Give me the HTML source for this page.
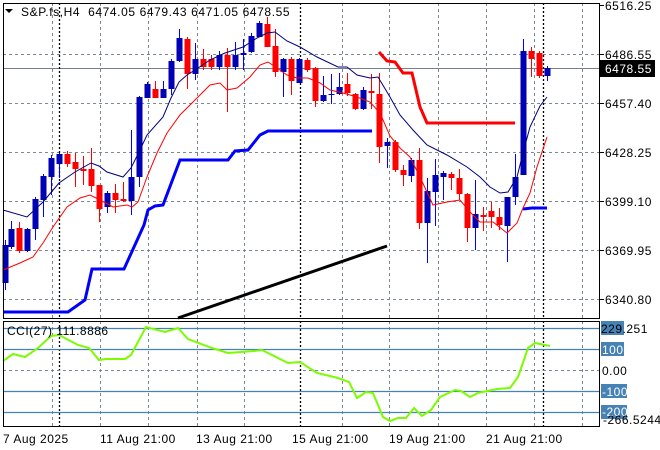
<!DOCTYPE html><html><head><meta charset="utf-8"><style>
body{margin:0;background:#fff;width:660px;height:450px;overflow:hidden;font-family:"Liberation Sans",sans-serif}
svg{position:absolute;left:0;top:0}
text{font-family:"Liberation Sans",sans-serif;font-size:12px;fill:#000;letter-spacing:0.5px}
</style></head><body>
<svg id="s" width="660" height="450" xmlns="http://www.w3.org/2000/svg">
<g stroke="#7b8896" stroke-dasharray="3,3" stroke-width="1" fill="none" id="grid"></g>
<line x1="3" y1="68.5" x2="599" y2="68.5" stroke="#75808c"/>
<g stroke="#000" stroke-dasharray="2,2" stroke-width="1.3">
<line x1="59.5" y1="3" x2="59.5" y2="318"/><line x1="300.5" y1="3" x2="300.5" y2="318"/><line x1="543.5" y1="3" x2="543.5" y2="318"/>
<line x1="59.5" y1="321" x2="59.5" y2="426"/><line x1="300.5" y1="321" x2="300.5" y2="426"/><line x1="543.5" y1="321" x2="543.5" y2="426"/>
</g>
<g stroke="#4682b4" stroke-width="1.2">
<line x1="3" y1="328.5" x2="599" y2="328.5"/><line x1="3" y1="349.5" x2="599" y2="349.5"/><line x1="3" y1="391.5" x2="599" y2="391.5"/><line x1="3" y1="412.5" x2="599" y2="412.5"/>
</g>
<line x1="3" y1="370.5" x2="599" y2="370.5" stroke="#7b8896" stroke-dasharray="3,3"/>
<polyline fill="none" stroke="#0000ff" stroke-width="3" points="3,312 68,312 85,300 92,269 124,269 144,225 148,210 155,206 163,205 180,160 228,160 235,151 248,150 260,135 268,131 372,131"/>
<polyline fill="none" stroke="#0000ff" stroke-width="3" points="523,209 532,208 547,208"/>
<polyline fill="none" stroke="#ff0000" stroke-width="3" points="379,52 387,61 395,62 403,73 412,73 420,107 427,123 515,123"/>
<line x1="178" y1="318" x2="387" y2="246" stroke="#000" stroke-width="3"/>
<g id="c"></g>
<polyline fill="none" stroke="#000080" stroke-width="1" points="3,210 27,217 43,202 59,183 75,172 91,163 99,166 107,172 123,177 131,168 139,152 147,135 163,117 171,98 179,82 187,75 195,70 210,60 225,53 243,47 257,38 267,33 275,32 287,41 300,47 317,57 338,67 347,67 357,75 370,78 378,77 390,97 400,115 413,130 427,145 447,155 467,167 480,177 490,187 500,193 508,192 517,177 523,153 530,127 540,106 547,97"/>
<polyline fill="none" stroke="#ff0000" stroke-width="1" points="3,270 20,263 33,257 43,243 53,227 67,207 80,198 90,195 100,200 113,207 127,205 132,207 138,202 147,177 157,153 167,133 180,115 193,102 200,95 210,85 220,83 227,90 237,88 250,77 260,65 268,62 277,68 287,75 297,78 308,78 320,83 330,90 343,93 357,97 370,102 380,113 390,136 400,148 410,157 420,177 433,205 447,202 460,200 470,212 480,222 493,222 507,233 517,223 523,208 530,193 537,167 547,137"/>
<polyline fill="none" stroke="#7cfc00" stroke-width="2" points="3,361 13,354 25,357 38,348 51,336 59,335 78,345 89,348 99,360 106,359 125,359 131,355 146,327 165,332 178,328 188,339 212,348 228,353 254,351 262,350 288,363 300,362 317,373 338,378 349,382 357,398 366,392 373,393 383,417 390,421 398,418 406,418 414,408 422,416 431,410 440,397 455,390 461,391 470,397 478,393 497,389 510,388 518,377 528,348 535,343 550,346"/>
<rect x="3.5" y="3.5" width="596" height="315" fill="none" stroke="#000"/>
<rect x="3.5" y="321.5" width="596" height="105" fill="none" stroke="#000"/>
<g stroke="#000"><line x1="600" y1="5.5" x2="604" y2="5.5"/><line x1="600" y1="54.5" x2="604" y2="54.5"/><line x1="600" y1="103.5" x2="604" y2="103.5"/><line x1="600" y1="152.5" x2="604" y2="152.5"/><line x1="600" y1="201.5" x2="604" y2="201.5"/><line x1="600" y1="250.5" x2="604" y2="250.5"/><line x1="600" y1="299.5" x2="604" y2="299.5"/></g>
<text x="605" y="10">6516.25</text>
<text x="605" y="59">6486.55</text>
<rect x="600" y="60" width="55" height="17" fill="#000"/>
<text x="605" y="73" style="fill:#fff">6478.55</text>
<text x="605" y="108">6457.40</text>
<text x="605" y="157">6428.25</text>
<text x="605" y="206">6399.10</text>
<text x="605" y="255">6369.95</text>
<text x="605" y="304">6340.80</text>
<g fill="#4682b4"><rect x="601" y="321" width="23" height="14"/><rect x="601" y="342" width="23" height="14"/><rect x="601" y="384" width="26" height="14"/><rect x="601" y="405" width="26" height="14"/></g>
<text x="601" y="333">229.251</text>
<text x="602" y="354" style="fill:#fff">100</text>
<text x="602" y="375">0.00</text>
<text x="602" y="396" style="fill:#fff">-100</text>
<text x="602" y="416" style="fill:#fff">-200</text>
<text x="603" y="424">-266.5244</text>
<polygon points="5,9 13,9 9,13" fill="#000"/>
<text x="21" y="16" xml:space="preserve" style="letter-spacing:0.6px">S&amp;P.fs,H4  6474.05 6479.43 6471.05 6478.55</text>
<text x="7" y="335">CCI(27) 111.8886</text>
<text x="3" y="443">7 Aug 2025</text>
<text x="100" y="443">11 Aug 21:00</text>
<text x="196" y="443">13 Aug 21:00</text>
<text x="292" y="443">15 Aug 21:00</text>
<text x="389" y="443">19 Aug 21:00</text>
<text x="486" y="443">21 Aug 21:00</text>
</svg>
<script>
var NS="http://www.w3.org/2000/svg";
function el(p,t,a){var e=document.createElementNS(NS,t);for(var k in a)e.setAttribute(k,a[k]);p.appendChild(e);return e;}
var g=document.getElementById("grid");
[52,100,148,197,244,342,389,438,486,534,582].forEach(function(x){el(g,"line",{x1:x+.5,y1:3,x2:x+.5,y2:318});el(g,"line",{x1:x+.5,y1:321,x2:x+.5,y2:426});});
[54,103,152,201,250,299].forEach(function(y){el(g,"line",{x1:3,y1:y+.5,x2:599,y2:y+.5});});
var C=[[5,283,245,240,290],[11,247,229,221,249],[19,228,251,222,253],[27,251,229,228,252],[35,229,199,197,240],[43,200,176,174,217],[51,177,158,155,195],[59,164,154,153,178],[67,154,164,151,167],[75,162,169,153,187],[83,169,171,156,185],[91,169,186,148,192],[99,185,209,185,222],[107,207,193,191,213],[115,193,200,184,213],[123,199,201,182,202],[131,201,177,130,215],[139,177,97,96,187],[147,98,84,82,98],[155,89,98,81,98],[163,98,89,81,98],[171,89,61,59,95],[179,61,38,29,62],[187,39,74,37,89],[195,74,59,43,80],[203,59,67,49,70],[211,59,67,55,70],[219,67,55,51,70],[227,55,67,48,112],[235,67,55,42,70],[243,55,53,39,70],[251,52,36,33,53],[259,37,23,21,37],[267,24,47,17,47],[275,46,72,29,77],[283,72,59,58,97],[291,59,81,57,95],[299,83,59,58,83],[307,60,70,58,72],[315,68,101,67,107],[323,101,95,76,102],[331,95,94,74,104],[339,94,87,73,95],[347,84,93,73,96],[355,94,109,93,110],[363,109,90,87,110],[371,91,93,74,109],[379,94,147,73,163],[387,146,142,138,168],[395,142,170,140,172],[403,170,175,165,186],[411,176,160,158,182],[419,160,223,148,229],[427,223,191,178,263],[435,192,175,159,226],[443,177,173,171,200],[451,174,178,172,190],[459,178,194,169,200],[467,194,228,193,242],[475,228,214,180,250],[483,215,217,207,231],[491,211,217,202,228],[499,217,225,208,230],[507,226,197,197,262],[515,197,177,154,205],[523,175,51,39,175],[531,51,59,47,77],[539,53,76,51,78],[547,76,68,66,81]];
var cg=document.getElementById("c");
C.forEach(function(c){var up=c[2]<c[1];var col=up?"#0000b4":"#ff0000";var wc=up?"#0000ff":"#ff0000";
el(cg,"line",{x1:c[0]+.5,y1:c[3],x2:c[0]+.5,y2:c[4],stroke:wc,"stroke-width":1});
var t=Math.min(c[1],c[2]),h=Math.max(1,Math.abs(c[1]-c[2]));
el(cg,"rect",{x:c[0]-2.5,y:t,width:6,height:h,fill:col});});
</script>
</body></html>
